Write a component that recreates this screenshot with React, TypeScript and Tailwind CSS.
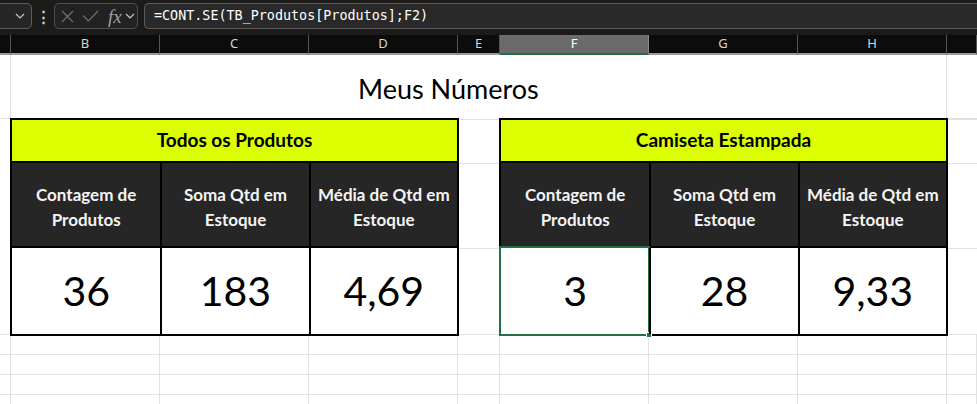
import React from 'react';

const COLS = ['', 'B', 'C', 'D', 'E', 'F', 'G', 'H', ''];

interface Block {
  title: string;
  values: string[];
  selected?: number;
}

const HEADERS = [
  ['Contagem de', 'Produtos'],
  ['Soma Qtd em', 'Estoque'],
  ['Média de Qtd em', 'Estoque'],
];

const BLOCKS: Block[] = [
  { title: 'Todos os Produtos', values: ['36', '183', '4,69'] },
  { title: 'Camiseta Estampada', values: ['3', '28', '9,33'], selected: 0 },
];

const cellFont = { fontFamily: 'Lato, "Open Sans", sans-serif' };

function Chevron() {
  return (
    <svg width="10" height="6" viewBox="0 0 10 6" fill="none">
      <path d="M1 1l4 4 4-4" stroke="#c8c8c8" strokeWidth="1.2" />
    </svg>
  );
}

function FormulaBar() {
  return (
    <div className="flex h-[35px] items-start gap-[6px] bg-[#1c1b1a] pt-[3px] text-[#d8d8d8]">
      <div className="-ml-[8px] flex h-[26px] w-[40px] items-center justify-end rounded-[5px] border border-[#5c5c5c] bg-[#262626] pr-[6px]">
        <Chevron />
      </div>
      <div className="flex h-[26px] w-[10px] items-center justify-center text-[15px] font-bold leading-none text-[#d0d0d0]">
        ⋮
      </div>
      <div className="flex h-[26px] w-[84px] items-center rounded-[5px] border border-[#4e4e4e] bg-[#222] pl-[6px]">
        <svg width="13" height="13" viewBox="0 0 13 13">
          <path d="M1 1l11 11M12 1L1 12" stroke="#707070" strokeWidth="1.2" />
        </svg>
        <svg className="ml-[8px]" width="17" height="12" viewBox="0 0 17 12">
          <path d="M1 5.5l5.5 5.5L16 1" stroke="#707070" strokeWidth="1.2" fill="none" />
        </svg>
        <span
          className="ml-[9px] text-[19px] italic leading-none text-[#a0a0a0]"
          style={{ fontFamily: '"Liberation Serif", serif' }}
        >
          fx
        </span>
        <span className="ml-[3px] flex">
          <Chevron />
        </span>
      </div>
      <div
        className="flex h-[26px] flex-1 items-center rounded-l-[5px] border border-r-0 border-[#5c5c5c] bg-[#292929] pl-[9px] text-[13.4px] text-white"
        style={{ fontFamily: '"DejaVu Sans Mono", "Liberation Mono", monospace' }}
      >
        =CONT.SE(TB_Produtos[Produtos];F2)
      </div>
    </div>
  );
}

function Table({ block }: { block: Block }) {
  return (
    <div className="relative z-10 -m-px flex flex-col border-2 border-black" style={cellFont}>
      <div className="flex h-[43px] items-center justify-center border-b-2 border-black bg-[#dbff00] text-[19px] font-bold text-black">
        {block.title}
      </div>
      <div className="grid h-[85px] grid-cols-3 border-b-2 border-black bg-[#262626]">
        {HEADERS.map((h, i) => (
          <div
            key={i}
            className={`flex flex-col items-center justify-center pt-[5px] text-[17px] font-bold leading-[25px] text-[#f4f4f4] ${i > 0 ? 'border-l-2 border-black' : ''}`}
          >
            <span>{h[0]}</span>
            <span>{h[1]}</span>
          </div>
        ))}
      </div>
      <div className="grid flex-1 grid-cols-3 bg-white">
        {block.values.map((v, i) => (
          <div
            key={i}
            className={`relative flex items-center justify-center text-[41px] text-black ${i > 0 ? 'border-l-2 border-black' : ''}`}
          >
            {v}
            {block.selected === i && (
              <div className="absolute -top-[2px] -left-[2px] -right-[1px] -bottom-[2px] border-2 border-[#217346]">
                <div className="absolute -right-[4px] -bottom-[4px] h-[6px] w-[6px] border border-white bg-[#217346]" />
              </div>
            )}
          </div>
        ))}
      </div>
    </div>
  );
}

export default function App() {
  const rowsBelow = [0, 1, 2, 3];
  return (
    <div className="h-[404px] w-[977px] overflow-hidden bg-white">
      <FormulaBar />
      <div className="grid grid-cols-[11px_149px_149px_149px_42px_149px_149px_149px_1fr] grid-rows-[20px_64px_45px_85px_86px_20px_20px_20px_20px]">
        {COLS.map((c, i) => (
          <div
            key={i}
            className={`flex items-center justify-center border-r border-b-2 text-[13px] ${c === 'F' ? 'border-b-[#217346] border-r-[#8a8a8a] bg-[#6b6b6b] text-white' : 'border-b-[#9a9a9a] border-r-[#555] bg-[#0c0c0c] text-[#d6d6d6]'}`}
            style={{ fontFamily: '"Noto Sans", sans-serif' }}
          >
            {c}
          </div>
        ))}

        <div className="border-r border-b border-[#e1e1e1]" />
        <div
          className="col-span-7 flex items-center border-r border-[#e1e1e1] pl-[347px] pt-[4px] text-[27px] text-black"
          style={cellFont}
        >
          Meus Números
        </div>
        <div className="border-b border-[#e1e1e1]" />

        <div className="row-span-3 border-r border-b border-[#e1e1e1]" />
        <div className="col-span-3 row-span-3 grid">
          <Table block={BLOCKS[0]} />
        </div>
        <div className="row-span-3 grid grid-rows-[45px_85px_86px]">
          <div className="border-b border-r border-t border-[#e1e1e1]" />
          <div className="border-b border-r border-[#e1e1e1]" />
          <div className="border-b border-r border-[#e1e1e1]" />
        </div>
        <div className="col-span-3 row-span-3 grid">
          <Table block={BLOCKS[1]} />
        </div>
        <div className="row-span-3 grid grid-rows-[45px_85px_86px]">
          <div className="border-b border-t border-[#e1e1e1]" />
          <div className="border-b border-[#e1e1e1]" />
          <div className="border-b border-[#e1e1e1]" />
        </div>

        {rowsBelow.map((r) =>
          COLS.map((_, i) => (
            <div key={`${r}-${i}`} className="border-r border-b border-[#e1e1e1]" />
          )),
        )}
      </div>
    </div>
  );
}
